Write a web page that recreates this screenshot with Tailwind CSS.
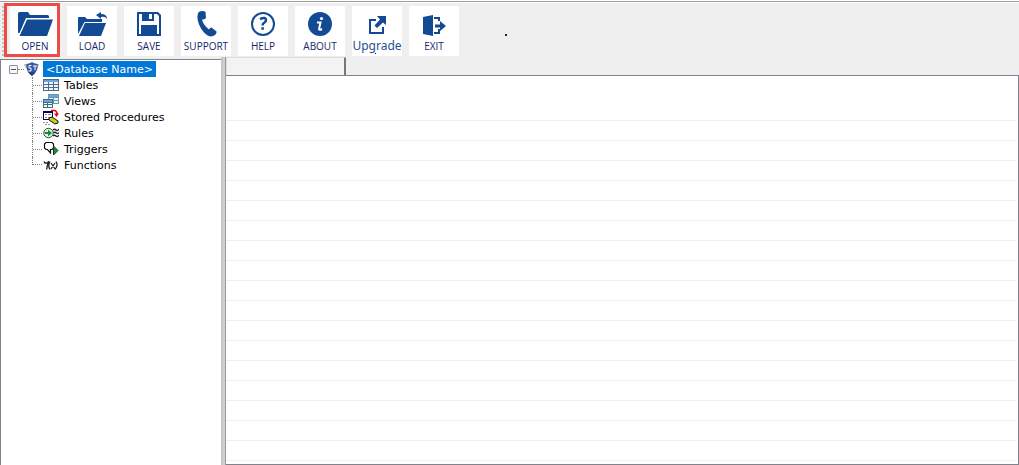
<!DOCTYPE html>
<html lang="en">
<head>
  <meta charset="UTF-8">
  <meta name="viewport" content="width=device-width, initial-scale=1">
  <title>Database Viewer</title>
  <script src="https://cdn.jsdelivr.net/npm/@tailwindcss/browser@4"></script>
</head>
<body class="bg-[#efefef] h-screen flex flex-col overflow-hidden text-black">

  <!-- Toolbar -->
  <header class="shrink-0 border-t border-white">
    <div class="border-t border-[#999f99]">
      <div class="border-t border-white flex items-start pt-[3px] pb-px pl-[2px] font-['Open_Sans',sans-serif] text-[10px] font-medium leading-3 text-[#16296a]">
        <div class="w-[3px] h-[50px] mr-[5px] border-l-2 border-dotted border-[#c4c4c4]"></div>
        <nav class="flex gap-[7px]">
          <button class="relative w-[50px] h-[50px] bg-white flex flex-col items-center">
            <svg class="w-[50px] h-[34px]" viewBox="0 0 50 34" fill="#124b94"><path d="M8 27V7.500Q8 6 9.500 6H18l2 3h17.500Q39 9 39 10.500V12H16L9.500 27z"/><path d="M17 13.500H43L37 30H9.500z"/></svg>
            <span>OPEN</span>
            <!-- Highlight frame -->
            <span class="absolute -left-1.5 right-0 -top-[3px] -bottom-px border-3 border-[#ee4b46]"></span>
          </button>
          <button class="w-[50px] h-[50px] bg-white flex flex-col items-center">
            <svg class="w-[50px] h-[34px]" viewBox="0 0 50 34" fill="#124b94"><path d="M11 28V12q0-1 1-1h6l2 2h15v3H17.500z"/><path d="M18 17H39L34 30H12z"/><path d="M29 9l5-3v2q6 0 6 5-2-3-6-2v2z"/></svg>
            <span>LOAD</span>
          </button>
          <button class="w-[50px] h-[50px] bg-white flex flex-col items-center">
            <svg class="w-[50px] h-[34px]" viewBox="0 0 50 34"><path fill="#124b94" fill-rule="evenodd" d="M13 6H34l3 3V30H13zM15 8V28H17V19H33V28H35V10L33 8H30V15H18V8zM25 8V13H28V8z"/><path fill="#124b94" d="M17 20H33V29H17z"/></svg>
            <span>SAVE</span>
          </button>
          <button class="w-[50px] h-[50px] bg-white flex flex-col items-center">
            <svg class="w-[50px] h-[34px]" viewBox="0 0 50 34" fill="#124b94"><path d="M17 7q1-2 4-2 3 0 3.500 1l.5 6q-1 1.500-4 1.500 1 5 7 10 1-2 2.500-2l5 4q.5 1-1 3-2 2-5 2-5-1-9.500-8Q15 14 17 7z"/></svg>
            <span>SUPPORT</span>
          </button>
          <button class="w-[50px] h-[50px] bg-white flex flex-col items-center">
            <svg class="w-[50px] h-[34px]" viewBox="0 0 50 34" fill="none" stroke="#124b94"><circle cx="25" cy="18" r="11" stroke-width="2"/><path d="M22 13q6-2.500 6 1 0 1.500-1.500 2.500-2 1-2 3" stroke-width="2.500"/><path d="M23.300 22.500h2.600" stroke-width="2.500"/></svg>
            <span>HELP</span>
          </button>
          <button class="w-[50px] h-[50px] bg-white flex flex-col items-center">
            <svg class="w-[50px] h-[34px]" viewBox="0 0 50 34"><circle cx="25" cy="18" r="12" fill="#124b94"/><path d="M22 16.500H25.500L24 23q0 1.500 3 0" fill="none" stroke="#fff" stroke-width="2"/><circle cx="26.500" cy="12.500" r="1.600" fill="#fff"/></svg>
            <span>ABOUT</span>
          </button>
          <button class="w-[50px] h-[50px] bg-white flex flex-col items-center">
            <svg class="w-[50px] h-[34px]" viewBox="0 0 50 34"><path d="M24 14H18V27H31V21" fill="none" stroke="#124b94" stroke-width="2"/><path d="M25 10H34V19L31 16.500 25 22 22.500 19.500 28 13.500z" fill="#124b94"/></svg>
            <span class="font-['Noto_Sans',sans-serif] text-xs font-normal leading-3 text-[#1d4f92]">Upgrade</span>
            <span class="w-px h-px bg-black -ml-1 mt-px"></span>
          </button>
          <button class="w-[50px] h-[50px] bg-white flex flex-col items-center">
            <svg class="w-[50px] h-[34px]" viewBox="0 0 50 34" fill="#124b94"><path d="M14 11L24 9V30L14 28z"/><path d="M25 11H31V15H29V13H25zM25 26H29V23H31V28H25z"/><path d="M26 18.500H31V15L37 20 31 25V21.500H26z"/></svg>
            <span>EXIT</span>
          </button>
        </nav>
        <span class="w-0.5 h-0.5 bg-[#222] ml-[46px] mt-7"></span>
      </div>
    </div>
  </header>

  <div class="flex-1 min-h-0 flex">
    <!-- Object tree -->
    <aside class="w-[221px] shrink-0 mt-[2px] bg-white border-t border-l border-[#82828c] pt-px font-['DejaVu_Sans',sans-serif] text-[11px] leading-[18px]">
      <div class="flex items-center h-4 pl-2">
        <button class="w-[9px] h-[9px] border border-[#919191] rounded-[1px] bg-[#f8f8f8] flex items-center justify-center" aria-label="Collapse"><span class="w-[5px] h-px bg-[#3f4b9c]"></span></button>
        <span class="w-[6px] border-t border-dotted border-[#808080]"></span>
        <svg class="w-4 h-4" viewBox="0 0 16 16"><path d="M2 3Q5 3 8 1q3 2 6 2 0 8-6 12Q2 11 2 3z" fill="#385ba3"/><path d="M0 4h3M1 6h2M13 4h2" stroke="#8a8f99"/><path d="M7.500 4.500H5v2.500h2v3H4.500M9 5h4M11 5v4" fill="none" stroke="#fff"/><path d="M4 11h7l-3 4z" fill="#24407d"/></svg>
        <a href="#" class="ml-[3px] h-4 px-[3px] bg-[#0078d7] text-white whitespace-nowrap">&lt;Database Name&gt;</a>
      </div>
      <ul class="ml-[31px]">
        <li class="flex items-center h-4 border-l border-dotted border-[#808080]">
          <span class="w-[9px] mr-px border-t border-dotted border-[#808080]"></span>
          <svg class="w-4 h-4" viewBox="0 0 16 16" shape-rendering="crispEdges"><path d="M0 2h16v12H0z" fill="#4c6c84"/><path d="M1 3h14v2H1z" fill="#6ba4dc"/><path d="M1 5h4v2H1zM6 5h4v2H6zM11 5h4v2h-4zM1 8h4v2H1zM6 8h4v2H6zM11 8h4v2h-4zM1 11h4v2H1zM6 11h4v2H6zM11 11h4v2h-4z" fill="#eef6ff"/></svg>
          <a href="#" class="ml-[5px] h-4">Tables</a>
        </li>
        <li class="flex items-center h-4 border-l border-dotted border-[#808080]">
          <span class="w-[9px] mr-px border-t border-dotted border-[#808080]"></span>
          <svg class="w-4 h-4" viewBox="0 0 16 16" shape-rendering="crispEdges"><path d="M5 1h11v10H5z" fill="#6b98a3"/><path d="M6 2h9v2H6z" fill="#6ba4dc"/><path d="M6 5h4v2H6zM11 5h4v2h-4zM11 8h4v2h-4z" fill="#e5f4ff"/><path d="M0 6h10v9H0z" fill="#3c7080"/><path d="M1 7h8v2H1z" fill="#6ba4dc"/><path d="M1 10h3v1H1zM5 10h4v1H5zM1 12h3v2H1zM5 12h4v2H5z" fill="#eef6ff"/></svg>
          <a href="#" class="ml-[5px] h-4">Views</a>
        </li>
        <li class="flex items-center h-4 border-l border-dotted border-[#808080]">
          <span class="w-[9px] mr-px border-t border-dotted border-[#808080]"></span>
          <svg class="w-4 h-4" viewBox="0 0 16 16"><g shape-rendering="crispEdges"><path d="M0 2h10v9H0z" fill="#00006d"/><path d="M1 4h8v6H1z" fill="#fff"/><path d="M2 5h2v1H2zM5 5h3v1H5zM2 8h2v1H2zM5 8h3v1H5z" fill="#888"/><path d="M0 13h6M2 15h5" stroke="#999" stroke-dasharray="2 1"/></g><path d="M8 1.500h3q3 0 3 4" fill="none" stroke="#e00" stroke-width="1.500"/><path d="M11 4.500h5L13.500 8z" fill="#e00"/><path d="M6 9l3-1 6 4v2l-3 1-6-4z" fill="#c9cf18" stroke="#111"/></svg>
          <a href="#" class="ml-[5px] h-4">Stored Procedures</a>
        </li>
        <li class="flex items-center h-4 border-l border-dotted border-[#808080]">
          <span class="w-[9px] mr-px border-t border-dotted border-[#808080]"></span>
          <svg class="w-4 h-4" viewBox="0 0 16 16"><circle cx="5.500" cy="8" r="4.700" fill="#e3f5e3" stroke="#254d32"/><path d="M2 7h3V4.500L9 8l-4 3.500V9H2z" fill="#168c38"/><path d="M10 5q1.500-1.500 3 0t3-1M10.500 8q1.500-1.500 3 0t3-1M10 11q1.500-1.500 3 0t3-1" fill="none" stroke="#222" stroke-width="1.200"/></svg>
          <a href="#" class="ml-[5px] h-4">Rules</a>
        </li>
        <li class="flex items-center h-4 border-l border-dotted border-[#808080]">
          <span class="w-[9px] mr-px border-t border-dotted border-[#808080]"></span>
          <svg class="w-4 h-4" viewBox="0 0 16 16"><path d="M3 1.500h6L10.500 3v4L9 8.500H7.500V12L4.500 8.500H3L1.500 7V3z" fill="#fff" stroke="#111" stroke-width="1.200"/><path d="M10.500 5L15 9.500l-4.500 4.500z" fill="#1c8c30" stroke="#163c1c"/></svg>
          <a href="#" class="ml-[5px] h-4">Triggers</a>
        </li>
        <li class="flex items-start h-4">
          <span class="w-[10px] h-2 mr-px border-l border-b border-dotted border-[#808080]"></span>
          <svg class="w-4 h-4" viewBox="0 0 16 16" fill="none" stroke="#222" stroke-width="1.300"><path d="M1 4.500l1 2M2 6h4M5.500 4L3.500 12.500M7 4.500Q4.500 8.500 7 12.500M8 6l4 6M12 6l-4 6M13 4.500q2.500 4-1 8"/></svg>
          <a href="#" class="ml-[5px] h-4">Functions</a>
        </li>
      </ul>
    </aside>

    <!-- Splitter -->
    <div class="w-[5px] shrink-0 bg-[#cad3d1] border-l-2 border-r border-l-[#c6c6c6] border-r-[#999] cursor-col-resize"></div>

    <!-- Results -->
    <main class="flex-1 min-w-0 flex flex-col">
      <div class="h-[18px] shrink-0 bg-[#efefef]">
        <div class="w-[120px] h-[18px] bg-[#f3f3f3] border-t border-l border-r-2 border-t-[#dedede] border-l-[#dedede] border-r-[#777]"></div>
      </div>
      <div class="flex-1 min-h-0 bg-white border-t border-r border-b border-[#82828c] pr-px overflow-hidden">
        <table class="w-full border-collapse" aria-label="Records">
          <tbody>
            <tr class="h-11 border-b border-[#efefef]"><td class="p-0"></td></tr>
            <tr class="h-5 border-b border-[#efefef]"><td class="p-0"></td></tr>
            <tr class="h-5 border-b border-[#efefef]"><td class="p-0"></td></tr>
            <tr class="h-5 border-b border-[#efefef]"><td class="p-0"></td></tr>
            <tr class="h-5 border-b border-[#efefef]"><td class="p-0"></td></tr>
            <tr class="h-5 border-b border-[#efefef]"><td class="p-0"></td></tr>
            <tr class="h-5 border-b border-[#efefef]"><td class="p-0"></td></tr>
            <tr class="h-5 border-b border-[#efefef]"><td class="p-0"></td></tr>
            <tr class="h-5 border-b border-[#efefef]"><td class="p-0"></td></tr>
            <tr class="h-5 border-b border-[#efefef]"><td class="p-0"></td></tr>
            <tr class="h-5 border-b border-[#efefef]"><td class="p-0"></td></tr>
            <tr class="h-5 border-b border-[#efefef]"><td class="p-0"></td></tr>
            <tr class="h-5 border-b border-[#efefef]"><td class="p-0"></td></tr>
            <tr class="h-5 border-b border-[#efefef]"><td class="p-0"></td></tr>
            <tr class="h-5 border-b border-[#efefef]"><td class="p-0"></td></tr>
            <tr class="h-5 border-b border-[#efefef]"><td class="p-0"></td></tr>
            <tr class="h-5 border-b border-[#efefef]"><td class="p-0"></td></tr>
            <tr class="h-5 border-b border-[#efefef]"><td class="p-0"></td></tr>
          </tbody>
        </table>
      </div>
    </main>
  </div>

</body>
</html>
